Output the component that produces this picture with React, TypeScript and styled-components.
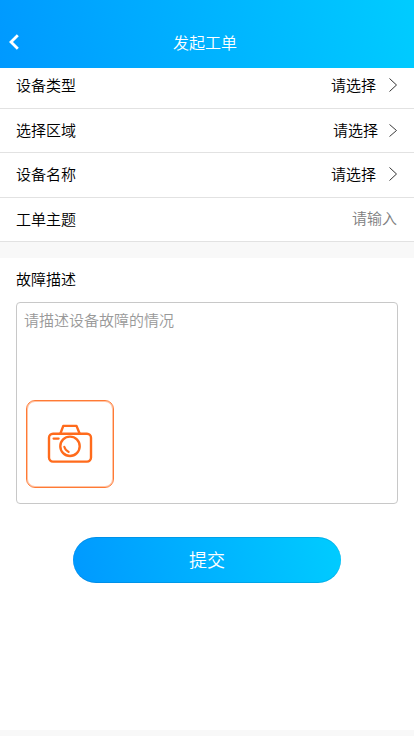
import React from "react";
import styled, { createGlobalStyle } from "styled-components";

const Global = createGlobalStyle`
  * { box-sizing: border-box; }
  body {
    margin: 0;
    background: #f8f8f8;
    color: #000;
    font-family: "Noto Sans CJK SC", sans-serif;
    font-weight: 350;
    font-size: 15px;
  }
`;

const Page = styled.main`
  display: flex;
  flex-direction: column;
  height: 736px;
  overflow: hidden;
`;

const Header = styled.header`
  display: grid;
  grid-template-columns: 38px 1fr 42px;
  align-items: center;
  height: 68px;
  padding-top: 16px;
  flex-shrink: 0;
  color: #fff;
  background: linear-gradient(78deg, #0099ff, #00ccff);
`;

const BackButton = styled.button`
  display: flex;
  height: 44px;
  padding: 0 0 0 8px;
  align-items: center;
  border: 0;
  background: none;
  color: inherit;
`;

const Title = styled.h1`
  margin: 0;
  font-size: 16px;
  line-height: 24px;
  font-weight: 350;
  text-align: center;
`;

const Rows = styled.section`
  display: grid;
  grid-template-rows: 41px 44px 45px 44px;
  flex-shrink: 0;
  background: #fff;
`;

const Row = styled.div<{ $lift?: number }>`
  display: flex;
  align-items: center;
  justify-content: space-between;
  padding: 0 16px ${(p) => p.$lift ?? 1}px;
  border-bottom: 1px solid #e2e2e2;
  line-height: 22px;
`;

const Value = styled.span<{ $compact?: boolean }>`
  display: flex;
  align-items: center;
  gap: ${(p) => (p.$compact ? 11 : 13)}px;
`;

const Hint = styled.span`
  color: #808080;
  padding: 0 1px 2px 0;
`;

const Details = styled.section`
  display: flex;
  flex-direction: column;
  height: 472px;
  margin-top: 16px;
  padding: 10px 16px 0;
  flex-shrink: 0;
  background: #fff;
`;

const Label = styled.h2`
  margin: 0 0 12px;
  font-size: 15px;
  font-weight: 350;
  line-height: 22px;
`;

const DescriptionBox = styled.div`
  display: flex;
  flex-direction: column;
  justify-content: space-between;
  align-items: flex-start;
  height: 202px;
  padding: 6px 7px 15px;
  border: 1px solid #c8c8c8;
  border-radius: 4px;
`;

const Placeholder = styled.span`
  color: #999;
  line-height: 22px;
`;

const PhotoButton = styled.button`
  display: grid;
  place-items: center;
  width: 88px;
  height: 88px;
  margin: 0 0 0 2px;
  padding: 0;
  border: 1px solid #ff7a35;
  border-radius: 9px;
  background: #fff;
  box-shadow: inset 0 0 0 1px rgba(255, 109, 32, 0.4);
`;

const Submit = styled.button`
  align-self: center;
  width: 268px;
  height: 46px;
  margin-top: 33px;
  padding: 0 0 2px;
  border: 0;
  border-radius: 23px;
  color: #fff;
  font: 350 18px/26px "Noto Sans CJK SC", sans-serif;
  background: linear-gradient(78deg, #0099ff, #00ccff);
  box-shadow: inset 0 1px rgba(0, 80, 140, 0.2), inset 0 -1px rgba(0, 80, 140, 0.2);
`;

const BackIcon = () => (
  <svg width="12" height="18" viewBox="0 0 12 18" fill="none" stroke="currentColor" strokeWidth="2.8">
    <path d="M9.8 2.2 3 9l6.8 6.8" />
  </svg>
);

const ArrowIcon = ({ small = false }: { small?: boolean }) => (
  <svg width="9" height={small ? 13 : 14} viewBox="0 0 9 14" preserveAspectRatio="none" fill="none" stroke="#333" strokeWidth="1">
    <path d="M.5 .5 7.5 7 .5 13.5" />
  </svg>
);

const CameraIcon = () => (
  <svg width="46" height="40" viewBox="0 0 46 40" fill="none" stroke="#ff6b1c" strokeWidth="2.4" strokeLinecap="round" strokeLinejoin="round">
    <rect x="2" y="9.8" width="42" height="27.8" rx="4" />
    <path d="M13.5 9.2 16.3 1.9h13.2l3 7.3" />
    <circle cx="23" cy="22.3" r="9.7" />
    <path d="M17.3 22.8c.7 2.5 2.1 4.2 4.4 5.1M6.5 14.6h5.2" strokeWidth="2.1" />
  </svg>
);

export default function App() {
  return (
    <Page>
      <Global />
      <Header>
        <BackButton aria-label="返回"><BackIcon /></BackButton>
        <Title>发起工单</Title>
      </Header>
      <Rows>
        <Row $lift={6}><span>设备类型</span><Value>请选择<ArrowIcon /></Value></Row>
        <Row><span>选择区域</span><Value $compact>请选择<ArrowIcon small /></Value></Row>
        <Row $lift={2}><span>设备名称</span><Value>请选择<ArrowIcon /></Value></Row>
        <Row><span>工单主题</span><Hint>请输入</Hint></Row>
      </Rows>
      <Details>
        <Label>故障描述</Label>
        <DescriptionBox>
          <Placeholder>请描述设备故障的情况</Placeholder>
          <PhotoButton aria-label="添加照片"><CameraIcon /></PhotoButton>
        </DescriptionBox>
        <Submit>提交</Submit>
      </Details>
    </Page>
  );
}
